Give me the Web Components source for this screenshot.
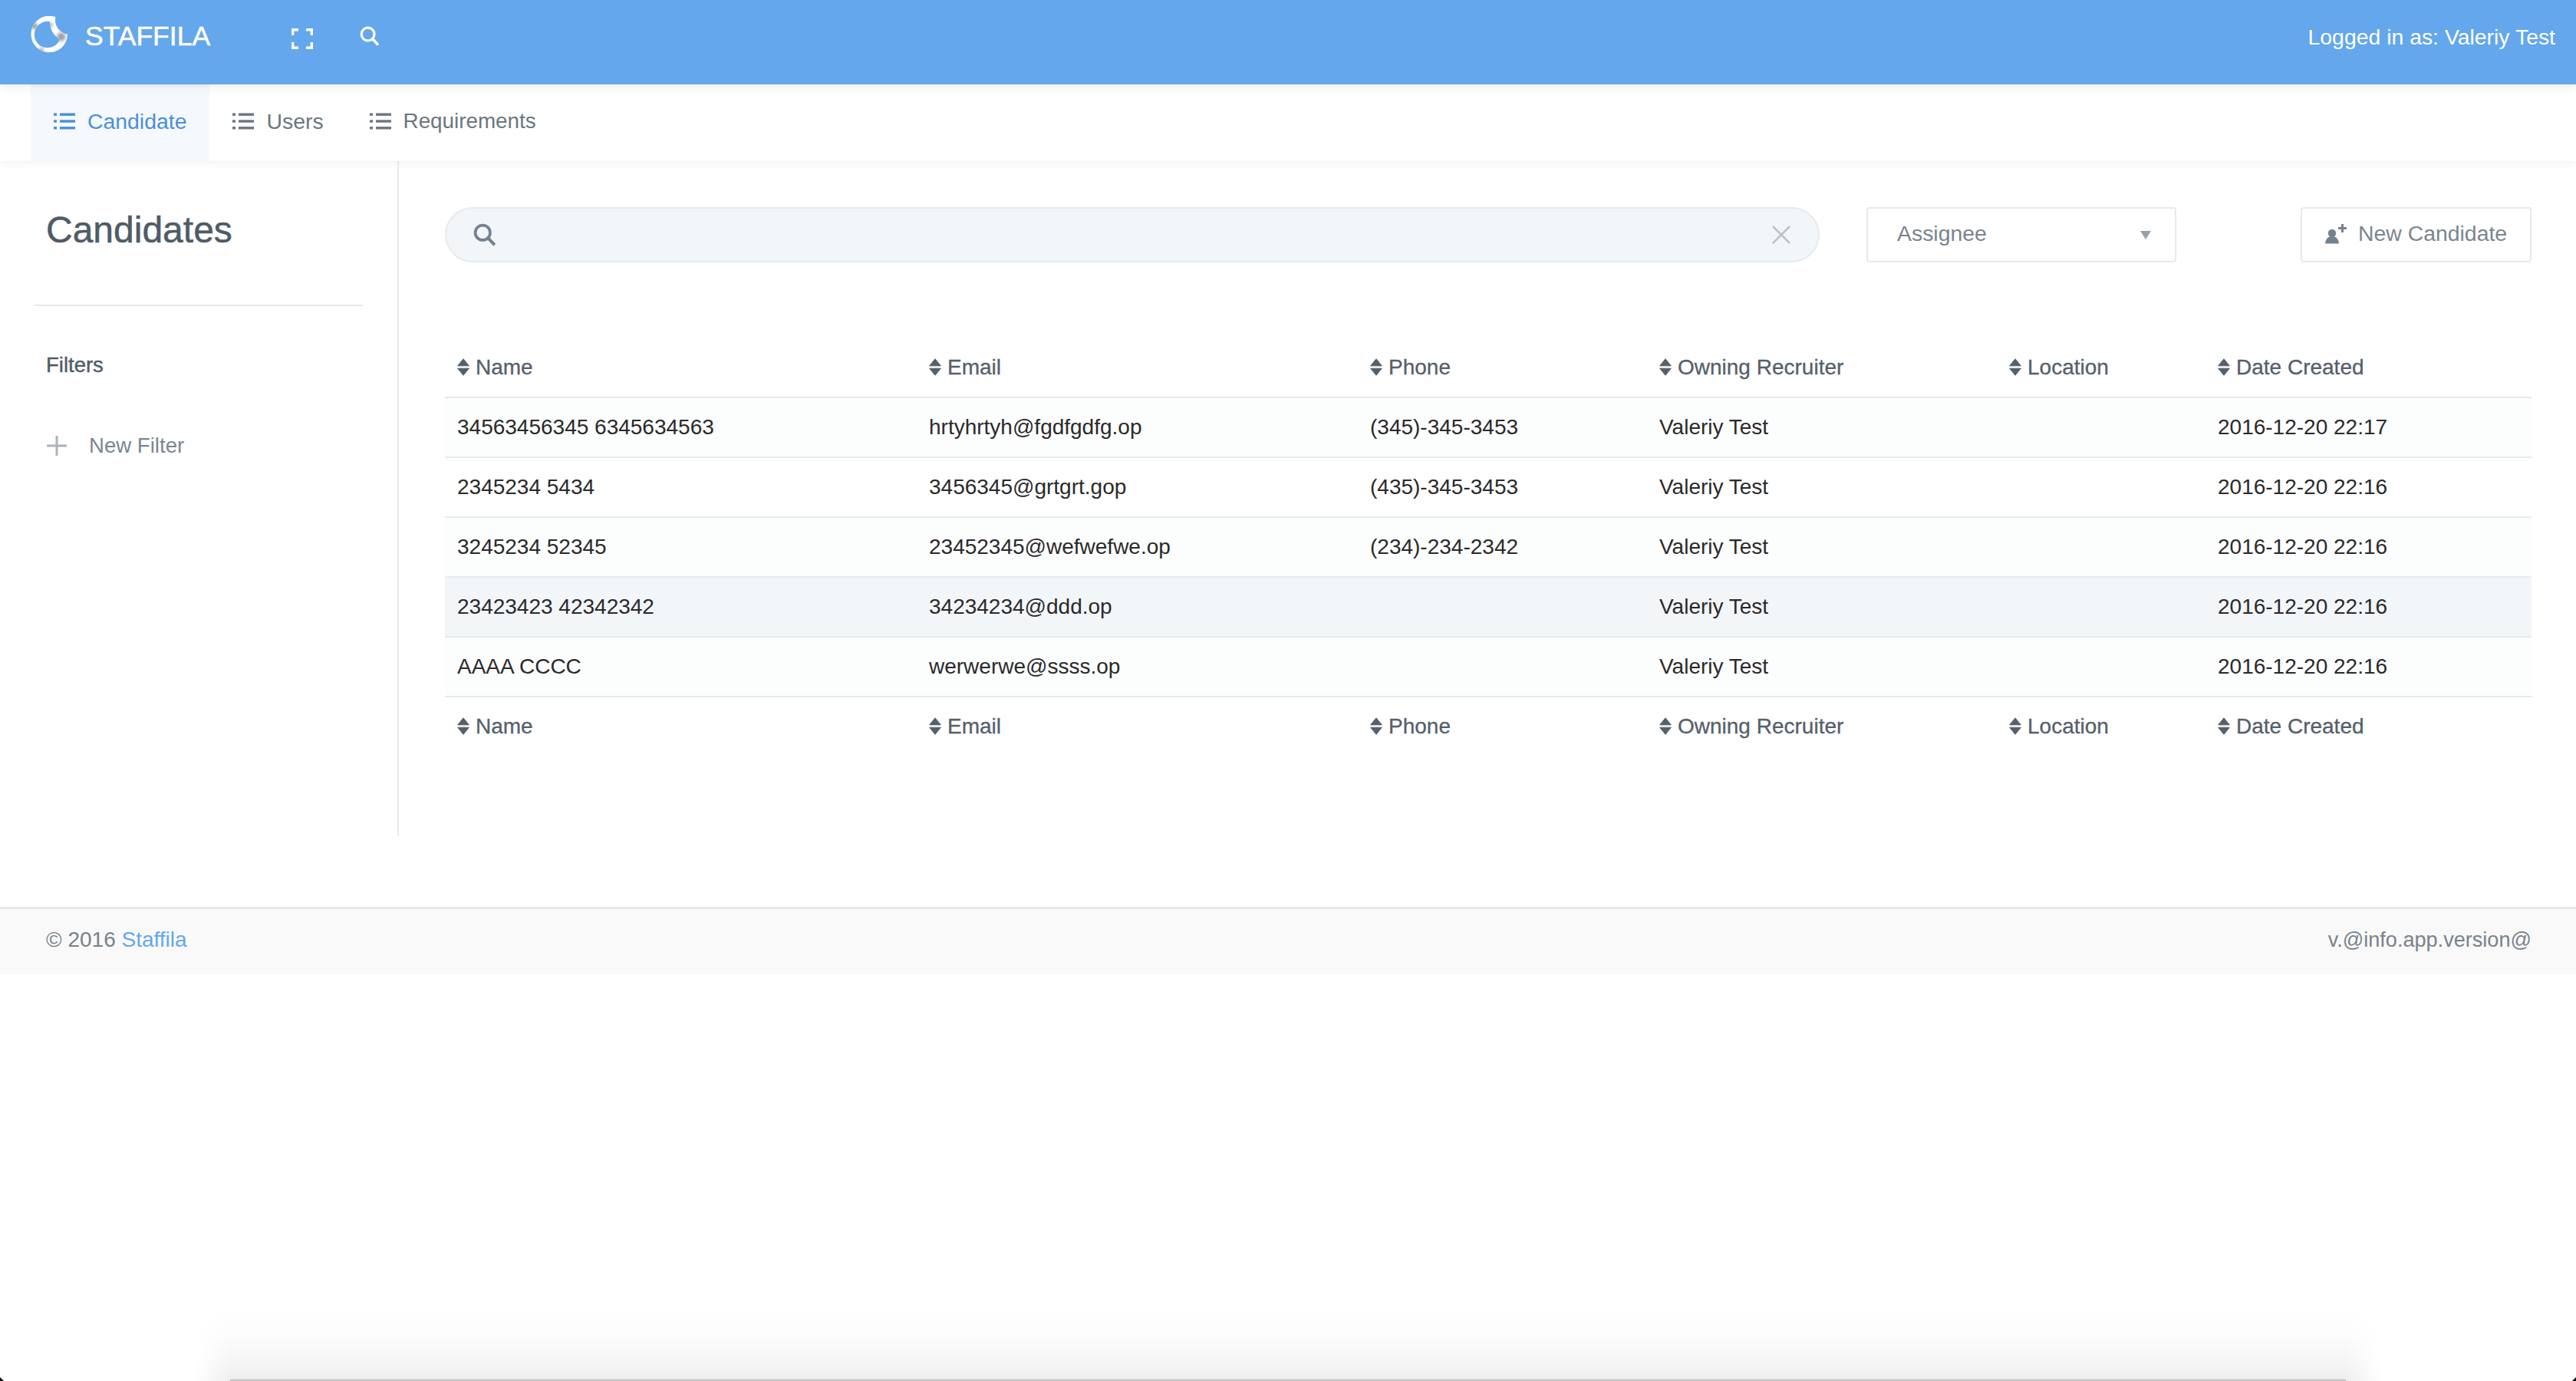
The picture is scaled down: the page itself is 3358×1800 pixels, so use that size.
<!DOCTYPE html>
<html lang="en">
<head>
<meta charset="utf-8">
<title>Staffila - Candidates</title>
<style>
  html, body { margin: 0; height: 1800px; overflow: hidden; background: #fff; }
  body { position: relative; font: 28px "Liberation Sans", Arial, sans-serif; color: #2a2a2a; }
</style>
</head>
<body>
<app-header user="Logged in as: Valeriy Test"></app-header>
<app-nav>
  <nav-tab active>Candidate</nav-tab>
  <nav-tab>Users</nav-tab>
  <nav-tab style="font-size: 27.8px">Requirements</nav-tab>
</app-nav>
<app-main>
  <side-panel slot="side" heading="Candidates"></side-panel>
  <search-bar slot="tools"></search-bar>
  <assignee-select slot="tools">Assignee</assignee-select>
  <new-button slot="tools">New Candidate</new-button>
  <candidate-table slot="content"></candidate-table>
</app-main>
<app-footer version="v.@info.app.version@"></app-footer>
<window-shade></window-shade>

<script>
const SEARCH_ICON = (color, w) => `<svg width="${w}" height="${w}" viewBox="0 0 26 26" fill="none" stroke="${color}">
  <circle cx="10.6" cy="10.6" r="8.4" stroke-width="3.2"/><path d="M16.8 16.8L24 24.6" stroke-width="3.6"/></svg>`;

const LIST_ICON = `<svg width="28" height="22" viewBox="0 0 28 22" fill="currentColor">
  <rect x="0" y="0.5" width="4" height="3.4"/><rect x="0" y="9.3" width="4" height="3.4"/><rect x="0" y="18.1" width="4" height="3.4"/>
  <rect x="8" y="0.5" width="20" height="3.4"/><rect x="8" y="9.3" width="20" height="3.4"/><rect x="8" y="18.1" width="20" height="3.4"/></svg>`;

const SORT_ICON = `<svg width="16" height="23" viewBox="0 0 16 23" fill="#55606b" stroke="#55606b" stroke-width="1" stroke-linejoin="round">
  <path d="M8 .8L15.3 9.8H.7z"/><path d="M8 22.2L15.3 13.2H.7z"/></svg>`;

class AppHeader extends HTMLElement {
  connectedCallback() {
    this.attachShadow({ mode: 'open' }).innerHTML = `<style>
      :host { display: flex; position: relative; z-index: 2; box-sizing: border-box; height: 110px; padding: 0 27px 15px 40px;
        align-items: center; background: #64a7ec; color: #fff; box-shadow: 0 4px 14px rgba(0,0,0,.07); }
      .logo { display: block; margin-top: -5px; }
      .brand { margin-left: 23px; font-size: 35.5px; -webkit-text-stroke: .5px #fff; }
      .expand { margin-left: 106px; margin-top: 6px; display: block; }
      .find { margin-left: 61px; margin-top: 6px; display: block; }
      .user { margin-left: auto; font-size: 28.4px; margin-top: 1px; }
    </style>
    <svg class="logo" width="48" height="48" viewBox="30 27 145 144">
      <defs>
        <clipPath id="ring"><path clip-rule="evenodd" d="M128 30A72 72 0 1 0 175 98A56 56 0 0 1 128 30ZM105 48A52 52 0 1 0 145 118A80 80 0 0 1 105 48Z"/></clipPath>
        <filter id="soft"><feGaussianBlur stdDeviation="7"/></filter>
      </defs>
      <g clip-path="url(#ring)">
        <rect x="20" y="20" width="170" height="160" fill="#fff"/>
        <g filter="url(#soft)" fill="#9a9a9a">
          <circle cx="45" cy="66" r="13"/><circle cx="72" cy="160" r="9"/><circle cx="150" cy="108" r="17"/><circle cx="106" cy="62" r="9"/>
        </g>
      </g>
    </svg>
    <span class="brand">STAFFILA</span>
    <svg class="expand" width="28" height="27" viewBox="0 0 28 27" fill="none" stroke="#fff" stroke-width="3.4">
      <path d="M1.7 9V1.7H9M19 1.7H26.3V9M26.3 18V25.3H19M9 25.3H1.7V18"/></svg>
    <span class="find">${SEARCH_ICON('#fff', 26)}</span>
    <span class="user">${this.getAttribute('user')}</span>`;
  }
}

class AppNav extends HTMLElement {
  connectedCallback() {
    this.attachShadow({ mode: 'open' }).innerHTML = `<style>
      :host { display: flex; position: relative; z-index: 1; height: 100px; padding-left: 40px; background: #fff;
        box-shadow: 0 2px 10px rgba(0,0,0,.06); }
    </style><slot></slot>`;
  }
}

class NavTab extends HTMLElement {
  connectedCallback() {
    this.attachShadow({ mode: 'open' }).innerHTML = `<style>
      :host { display: flex; align-items: center; gap: 16px; padding: 0 30px 4px; color: #6b7680; font-size: 28.4px; }
      :host([active]) { background: #f5f8fc; color: #4a90d9; }
      svg { display: block; }
    </style>${LIST_ICON}<slot></slot>`;
  }
}

class AppMain extends HTMLElement {
  connectedCallback() {
    this.attachShadow({ mode: 'open' }).innerHTML = `<style>
      :host { display: flex; height: 880px; }
      .side { display: block; box-sizing: content-box; width: 518px; border-right: 2px solid #e6eaee; }
      .body { flex: 1; padding: 60px 58px 0 60px; min-width: 0; }
      .tools { display: flex; height: 72px; margin-bottom: 98px; }
    </style>
    <div class="side"><slot name="side"></slot></div>
    <div class="body">
      <div class="tools"><slot name="tools"></slot></div>
      <slot name="content"></slot>
    </div>`;
  }
}

class SidePanel extends HTMLElement {
  connectedCallback() {
    this.attachShadow({ mode: 'open' }).innerHTML = `<style>
      :host { display: block; }
      h1 { margin: 0; padding: 61px 0 0 60px; height: 187px; box-sizing: border-box; font-size: 48px; line-height: 58px;
        font-weight: normal; color: #4f5b66; -webkit-text-stroke: .5px #4f5b66; }
      hr { margin: 0 45px 0 44px; border: 0; height: 2px; background: #e6eaee; }
      .label { margin: 60px 0 0 60px; line-height: 34px; font-size: 27.5px; color: #4f5b66; -webkit-text-stroke: .4px #4f5b66; }
      .add { display: flex; align-items: center; gap: 29px; margin: 71px 0 0 61px; font-size: 27.6px; line-height: 34px; color: #7a8691; }
      svg { display: block; }
    </style>
    <h1>${this.getAttribute('heading')}</h1>
    <hr>
    <div class="label">Filters</div>
    <div class="add">
      <svg width="26" height="26" viewBox="0 0 26 26" fill="#aab4bd"><rect x="11.5" y="0" width="3" height="26"/><rect x="0" y="11.5" width="26" height="3"/></svg>
      <span>New Filter</span>
    </div>`;
  }
}

class SearchBar extends HTMLElement {
  connectedCallback() {
    this.attachShadow({ mode: 'open' }).innerHTML = `<style>
      :host { display: flex; align-items: center; box-sizing: border-box; width: 1792px; height: 72px; padding: 0 35px;
        justify-content: space-between; background: #f3f6f9; border: 2px solid #e6eaee; border-radius: 36px; }
      svg, span { display: block; }
    </style>
    <span>${SEARCH_ICON('#75828e', 30)}</span>
    <svg width="26" height="26" viewBox="0 0 26 26" fill="none" stroke="#bcc2c7" stroke-width="2.6"><path d="M2 2L24 24M24 2L2 24"/></svg>`;
  }
}

class AssigneeSelect extends HTMLElement {
  connectedCallback() {
    this.attachShadow({ mode: 'open' }).innerHTML = `<style>
      :host { display: flex; align-items: center; justify-content: space-between; box-sizing: border-box; width: 404px; height: 72px;
        margin-left: 61px; padding: 0 31px 3px 38px; background: #fff; border: 2px solid #e6eaee; border-radius: 4px;
        color: #7b848d; font-size: 28.4px; }
      i { display: block; width: 0; height: 0; margin-top: 3px; border: 7px solid transparent; border-top: 11px solid #98a1a9; border-bottom: 0; }
    </style><slot></slot><i></i>`;
  }
}

class NewButton extends HTMLElement {
  connectedCallback() {
    this.attachShadow({ mode: 'open' }).innerHTML = `<style>
      :host { display: flex; align-items: center; gap: 15px; box-sizing: border-box; width: 301px; height: 72px; margin-left: auto;
        padding: 0 0 3px 30px; background: #fff; border: 2px solid #e6eaee; border-radius: 4px; color: #7a8691; font-size: 28.4px; white-space: nowrap; }
      svg { display: block; }
    </style>
    <svg width="28" height="26" viewBox="0 0 28 26" fill="#75828e">
      <circle cx="9" cy="12" r="5.2"/><path d="M0 25.5C.8 19 4 16 9 16s8.2 3 9 9.5z"/>
      <rect x="21" y="0" width="3" height="11"/><rect x="17" y="4" width="11" height="3"/></svg>
    <slot></slot>`;
  }
}

const COLUMNS = ['Name', 'Email', 'Phone', 'Owning Recruiter', 'Location', 'Date Created'];
const COLUMN_WIDTHS = [615, 575, 377, 456, 272, 425];
const ROWS = [
  ['34563456345 6345634563', 'hrtyhrtyh@fgdfgdfg.op', '(345)-345-3453', 'Valeriy Test', '', '2016-12-20 22:17'],
  ['2345234 5434', '3456345@grtgrt.gop', '(435)-345-3453', 'Valeriy Test', '', '2016-12-20 22:16'],
  ['3245234 52345', '23452345@wefwefwe.op', '(234)-234-2342', 'Valeriy Test', '', '2016-12-20 22:16'],
  ['23423423 42342342', '34234234@ddd.op', '', 'Valeriy Test', '', '2016-12-20 22:16'],
  ['AAAA CCCC', 'werwerwe@ssss.op', '', 'Valeriy Test', '', '2016-12-20 22:16'],
];

class CandidateTable extends HTMLElement {
  connectedCallback() {
    const heads = COLUMNS.map(c => `<th><span class="h">${SORT_ICON}${c}</span></th>`).join('');
    const rows = ROWS.map((r, i) => `<tr class="${i === 3 ? 'hover' : i % 2 ? '' : 'odd'}">${r.map(c => `<td>${c}</td>`).join('')}</tr>`).join('');
    this.attachShadow({ mode: 'open' }).innerHTML = `<style>
      :host { display: block; }
      table { width: 2720px; table-layout: fixed; border-collapse: collapse; font-size: 28px; }
      th, td { height: 78px; padding: 0 16px; box-sizing: border-box; text-align: left; font-weight: normal; }
      td { border-top: 2px solid #e6eaee; color: #2a2a2a; white-space: nowrap; }
      th { color: #55606b; -webkit-text-stroke: .3px #55606b; }
      tfoot th { border-top: 2px solid #e6eaee; padding-bottom: 2px; }
      .h { display: flex; align-items: center; gap: 8px; }
      .h svg { display: block; flex: none; }
      .odd td { background: #fcfdfd; }
      .hover td { background: #f3f6f9; }
    </style>
    <table>
      <colgroup>${COLUMN_WIDTHS.map(w => `<col style="width:${w}px">`).join('')}</colgroup>
      <thead><tr>${heads}</tr></thead>
      <tbody>${rows}</tbody>
      <tfoot><tr>${heads}</tr></tfoot>
    </table>`;
  }
}

class AppFooter extends HTMLElement {
  connectedCallback() {
    this.attachShadow({ mode: 'open' }).innerHTML = `<style>
      :host { display: flex; justify-content: space-between; align-items: center; box-sizing: border-box; height: 88px; margin-top: 92px;
        padding: 0 58px 6px 60px; background: #f9f9f9; border-top: 3px solid #e6eaee; color: #78828c; font-size: 28px; }
      a { color: #64a7ec; text-decoration: none; }
      .version { font-size: 27.1px; }
    </style>
    <span>© 2016 <a href="#">Staffila</a></span>
    <span class="version">${this.getAttribute('version')}</span>`;
  }
}

// shadow of the window behind the screenshot, it sits over the bottom of the page
class WindowShade extends HTMLElement {
  connectedCallback() {
    this.attachShadow({ mode: 'open' }).innerHTML = `<style>
      :host { display: block; position: absolute; left: 0; right: 0; bottom: 0; height: 92px; overflow: hidden; pointer-events: none; }
      .fade { position: absolute; inset: 0 255px 0 255px;
        background: linear-gradient(to bottom, rgba(0,0,0,0), rgba(0,0,0,.012) 35%, rgba(0,0,0,.032) 65%, rgba(0,0,0,.068));
        -webkit-mask-image: linear-gradient(to right, transparent, #000 46px, #000 calc(100% - 46px), transparent);
        mask-image: linear-gradient(to right, transparent, #000 46px, #000 calc(100% - 46px), transparent); }
      .line { position: absolute; left: 300px; width: 2758px; bottom: 0; height: 3px; background: linear-gradient(#e4e4e4, #b4b4b4); }
      .corner { position: absolute; bottom: 0; width: 5px; height: 5px; background: #000; }
      .l { left: 0; clip-path: polygon(0 0, 100% 100%, 0 100%); }
      .r { right: 0; clip-path: polygon(100% 0, 100% 100%, 0 100%); }
    </style><div class="fade"></div><div class="line"></div><div class="corner l"></div><div class="corner r"></div>`;
  }
}

customElements.define('app-header', AppHeader);
customElements.define('app-nav', AppNav);
customElements.define('nav-tab', NavTab);
customElements.define('app-main', AppMain);
customElements.define('side-panel', SidePanel);
customElements.define('search-bar', SearchBar);
customElements.define('assignee-select', AssigneeSelect);
customElements.define('new-button', NewButton);
customElements.define('candidate-table', CandidateTable);
customElements.define('app-footer', AppFooter);
customElements.define('window-shade', WindowShade);
</script>
</body>
</html>
